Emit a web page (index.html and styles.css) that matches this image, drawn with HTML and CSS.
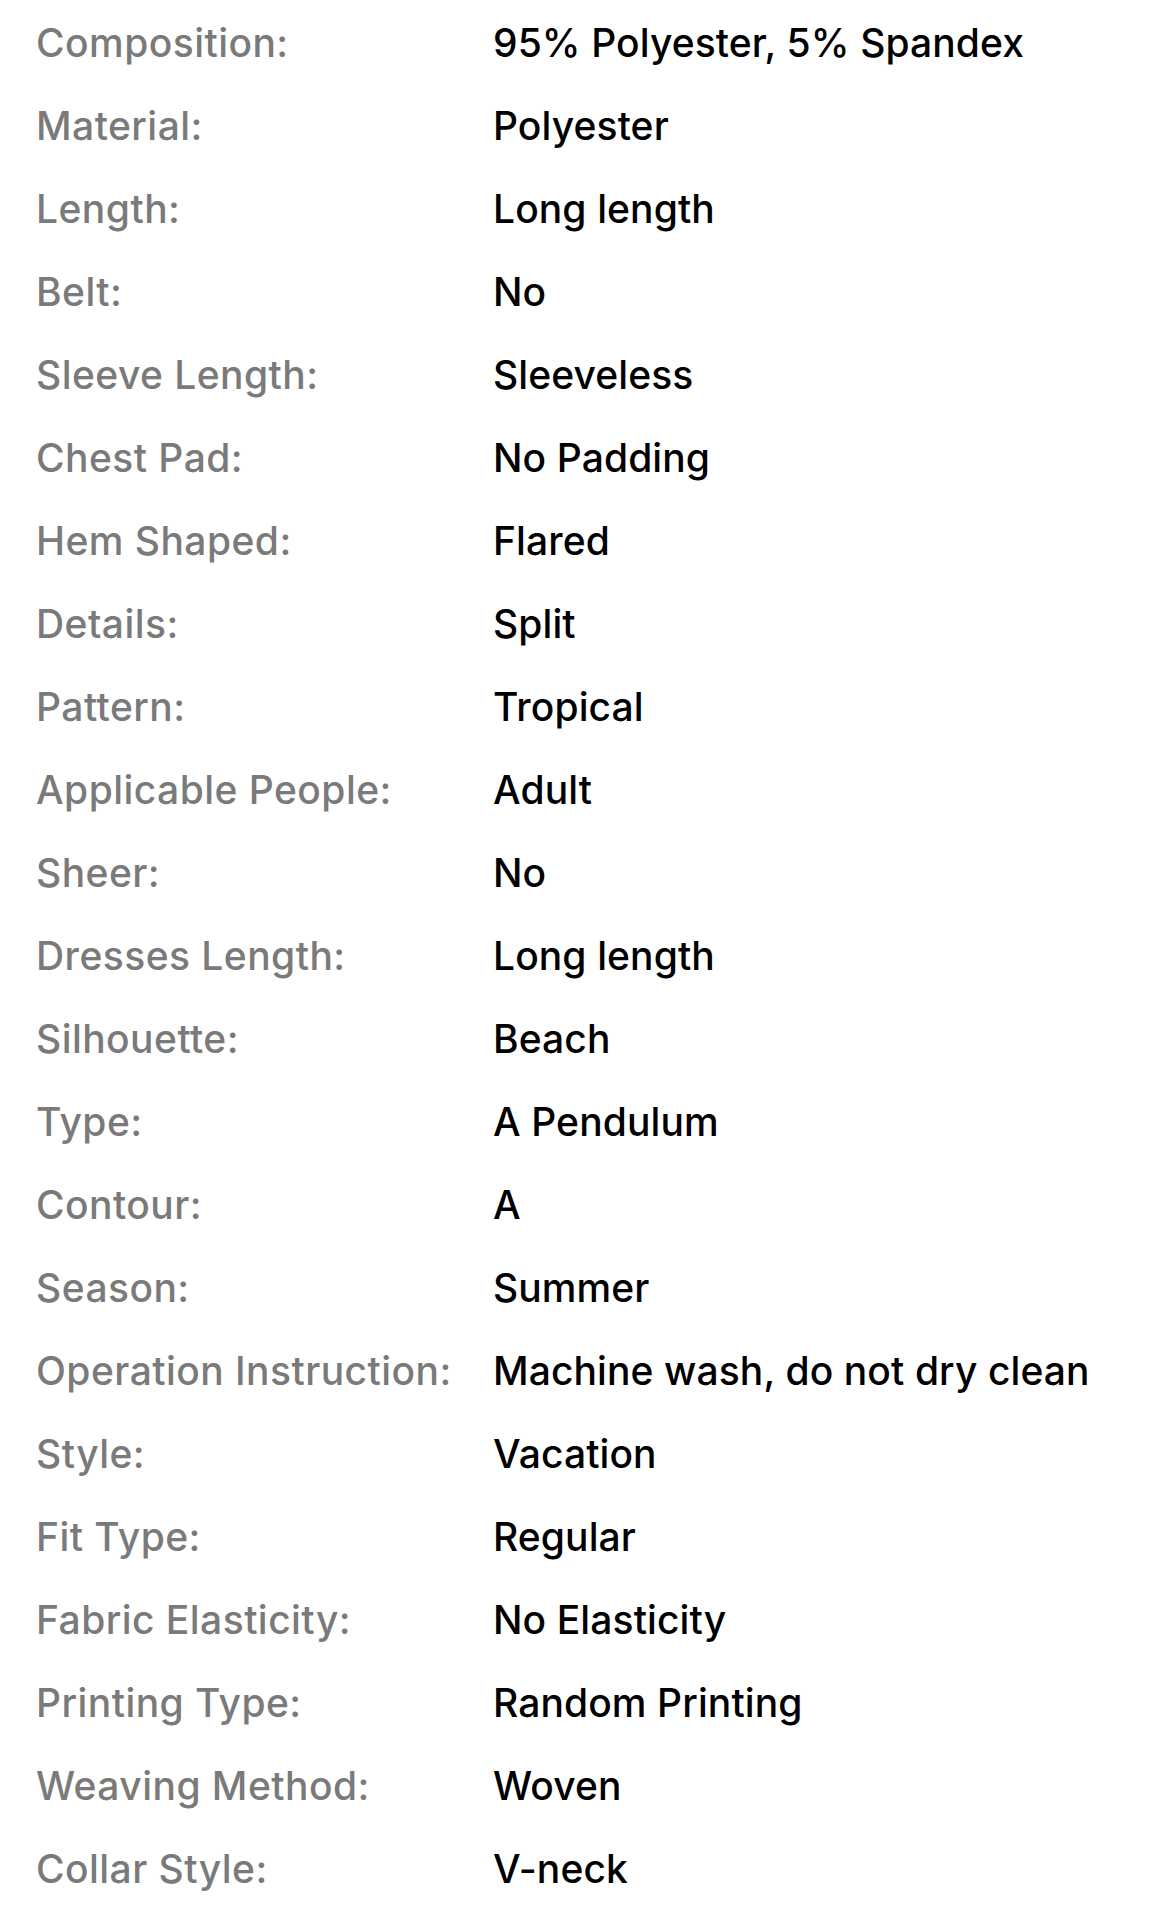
FILE: index.html
```html
<!DOCTYPE html>
<html lang="en">
<head>
<meta charset="utf-8">
<title>Specifications</title>
<link rel="stylesheet" href="styles.css">
</head>
<body>
<dl class="specs">
  <div class="row"><dt>Composition:</dt><dd>95% Polyester, 5% Spandex</dd></div>
  <div class="row"><dt>Material:</dt><dd>Polyester</dd></div>
  <div class="row"><dt>Length:</dt><dd>Long length</dd></div>
  <div class="row"><dt>Belt:</dt><dd>No</dd></div>
  <div class="row"><dt>Sleeve Length:</dt><dd>Sleeveless</dd></div>
  <div class="row"><dt>Chest Pad:</dt><dd>No Padding</dd></div>
  <div class="row"><dt>Hem Shaped:</dt><dd>Flared</dd></div>
  <div class="row"><dt>Details:</dt><dd>Split</dd></div>
  <div class="row"><dt>Pattern:</dt><dd>Tropical</dd></div>
  <div class="row"><dt>Applicable People:</dt><dd>Adult</dd></div>
  <div class="row"><dt>Sheer:</dt><dd>No</dd></div>
  <div class="row"><dt>Dresses Length:</dt><dd>Long length</dd></div>
  <div class="row"><dt>Silhouette:</dt><dd>Beach</dd></div>
  <div class="row"><dt>Type:</dt><dd>A Pendulum</dd></div>
  <div class="row"><dt>Contour:</dt><dd>A</dd></div>
  <div class="row"><dt>Season:</dt><dd>Summer</dd></div>
  <div class="row"><dt>Operation Instruction:</dt><dd>Machine wash, do not dry clean</dd></div>
  <div class="row"><dt>Style:</dt><dd>Vacation</dd></div>
  <div class="row"><dt>Fit Type:</dt><dd>Regular</dd></div>
  <div class="row"><dt>Fabric Elasticity:</dt><dd>No Elasticity</dd></div>
  <div class="row"><dt>Printing Type:</dt><dd>Random Printing</dd></div>
  <div class="row"><dt>Weaving Method:</dt><dd>Woven</dd></div>
  <div class="row"><dt>Collar Style:</dt><dd>V-neck</dd></div>
</dl>
</body>
</html>
```
FILE: styles.css
```css
html, body {
  margin: 0;
  padding: 0;
  background: #ffffff;
}
body {
  font-family: Inter, "Noto Sans", "Liberation Sans", sans-serif;
  font-size: 39px;
  font-weight: 500;
}
.specs {
  margin: 0;
  padding: 0 0 0 36px;
}
.row {
  box-sizing: border-box;
  display: grid;
  grid-template-columns: 457px 1fr;
  height: 83px;
  padding-top: 2px;
  align-items: center;
}
.row dt {
  margin: 0;
  color: #7a7a7a;
  letter-spacing: 0.45px;
  white-space: nowrap;
}
.row dd {
  margin: 0;
  color: #000000;
  letter-spacing: 0.1px;
  white-space: nowrap;
}
```
